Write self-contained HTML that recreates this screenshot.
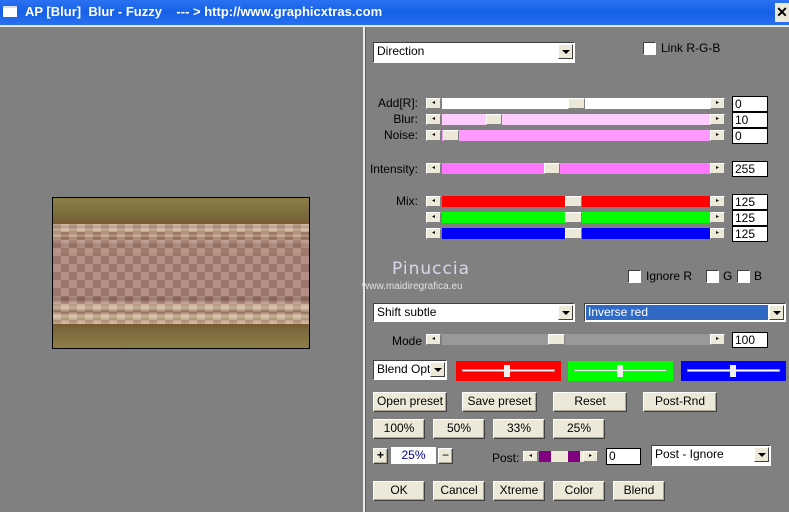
<!DOCTYPE html>
<html><head><style>
*{margin:0;padding:0;box-sizing:border-box}
body{width:789px;height:512px;background:#808080;position:relative;overflow:hidden;font-family:"Liberation Sans",sans-serif;font-size:12px;color:#000}
.a{position:absolute}
.btn{position:absolute;background:#ece9d8;border:1px solid;border-color:#fff #404040 #404040 #fff;box-shadow:inset -1px -1px 0 #aca899;text-align:center;font-size:12px;line-height:17px}
.sb{position:absolute;width:15px;height:11px;background:#ece9d8;border:1px solid;border-color:#fff #808080 #808080 #fff;font-size:6px;line-height:9px;text-align:center}
.th{position:absolute;height:11px;background:#ece9d8;border:1px solid;border-color:#fff #808080 #808080 #fff}
.inp{position:absolute;background:#fff;border:1px solid #000;font-size:12px;line-height:14px;padding-left:2px;width:36px;height:16px;left:732px}
.lbl{position:absolute;font-size:12px;text-align:right;width:62px;left:356px}
.dd{position:absolute;background:#fff;border:1px solid;border-color:#404040 #fff #fff #404040;font-size:12px;padding-left:3px;line-height:17px}
.dd .ar{position:absolute;right:1px;top:1px;width:15px;height:15px;background:#ece9d8;border:1px solid;border-color:#fff #404040 #404040 #fff}
.dd .ar:after{content:"";position:absolute;left:3px;top:5px;border-left:4px solid transparent;border-right:4px solid transparent;border-top:4px solid #000}
.cb{position:absolute;width:13px;height:13px;background:#fff;border:1px solid;border-color:#404040 #fff #fff #404040}
</style></head><body>
<div class="a" style="left:0;top:0;width:789px;height:25px;background:linear-gradient(#2a72f2,#1560e6 50%,#2a6ff0);"></div>
<div class="a" style="left:3px;top:6px;width:14px;height:11px;background:#fff;border-top:2px solid #dde"></div>
<div class="a" style="left:25px;top:4px;color:#fff;font-weight:bold;font-size:13px;white-space:pre">AP [Blur]  Blur - Fuzzy    --- &gt; http://www.graphicxtras.com</div>
<div class="a" style="left:775px;top:3px;width:14px;height:19px;background:#ece9d8;font-weight:bold;font-size:14px;text-align:center;line-height:19px">✕</div>
<div class="a" style="left:0;top:25px;width:789px;height:2px;background:#e8e8e8"></div>
<div class="a" style="left:363px;top:25px;width:2px;height:487px;background:#e8e8e8"></div>
<div class="a" style="left:365px;top:27px;width:1px;height:485px;background:#606060"></div>

<div class="a" style="left:52px;top:197px;width:258px;height:152px;border:1px solid #000;overflow:hidden;background:#a88478">
<div class="a" style="left:0;top:0;width:256px;height:26px;background:linear-gradient(#8c7e48,#7a6a3c 18px,#7a5a30)"></div>
<div class="a" style="left:0;top:26px;width:256px;height:100px;background:
repeating-linear-gradient(rgba(0,0,0,0) 0 14px,rgba(0,0,0,0) 14px),
conic-gradient(rgba(255,255,255,.12) 25%,rgba(0,0,0,.08) 0 50%,rgba(255,255,255,.12) 0 75%,rgba(0,0,0,.08) 0) 0 0/16px 16px,
linear-gradient(#d0b49a 0,#b09080 3px,#d8c0a0 6px,#a07868 9px,#c8a890 12px,#9a7060 14px,#b89888 17px,#9c7468 21px,#b08878 26px,#a88078 32px,#a88078 72px,#8c6458 75px,#c0a090 80px,#d8c0a0 84px,#9a7060 88px,#d8c4a4 92px,#b89a80 96px,#d0b498 100px)"></div>
<div class="a" style="left:0;top:126px;width:256px;height:24px;background:linear-gradient(#7a5a30,#7a6a3c 6px,#8c7e48)"></div>
</div>

<div class="dd" style="left:373px;top:42px;width:202px;height:21px">Direction<div class="ar"></div></div>
<div class="cb" style="left:643px;top:42px"></div>
<div class="a" style="left:661px;top:41px">Link R-G-B</div>

<div class="lbl" style="top:96px">Add[R]:</div>
<div class="lbl" style="top:112px">Blur:</div>
<div class="lbl" style="top:128px">Noise:</div>
<div class="lbl" style="top:162px">Intensity:</div>
<div class="lbl" style="top:194px">Mix:</div>

<div class="sb" style="left:426px;top:98px">◂</div><div class="a" style="left:442px;top:98px;width:268px;height:11px;background:#fff"></div><div class="th" style="left:568px;top:98px;width:17px"></div><div class="sb" style="left:710px;top:98px">▸</div><div class="inp" style="top:96px">0</div>
<div class="sb" style="left:426px;top:114px">◂</div><div class="a" style="left:442px;top:114px;width:268px;height:11px;background:#ffccff"></div><div class="th" style="left:486px;top:114px;width:16px"></div><div class="sb" style="left:710px;top:114px">▸</div><div class="inp" style="top:112px">10</div>
<div class="sb" style="left:426px;top:130px">◂</div><div class="a" style="left:442px;top:130px;width:268px;height:11px;background:#ff99ff"></div><div class="th" style="left:443px;top:130px;width:16px"></div><div class="sb" style="left:710px;top:130px">▸</div><div class="inp" style="top:128px">0</div>
<div class="sb" style="left:426px;top:163px">◂</div><div class="a" style="left:442px;top:163px;width:268px;height:11px;background:#ff77ff"></div><div class="th" style="left:544px;top:163px;width:16px"></div><div class="sb" style="left:710px;top:163px">▸</div><div class="inp" style="top:161px">255</div>
<div class="sb" style="left:426px;top:196px">◂</div><div class="a" style="left:442px;top:196px;width:268px;height:11px;background:#f00"></div><div class="th" style="left:565px;top:196px;width:17px"></div><div class="sb" style="left:710px;top:196px">▸</div><div class="inp" style="top:194px">125</div>
<div class="sb" style="left:426px;top:212px">◂</div><div class="a" style="left:442px;top:212px;width:268px;height:11px;background:#0f0"></div><div class="th" style="left:565px;top:212px;width:17px"></div><div class="sb" style="left:710px;top:212px">▸</div><div class="inp" style="top:210px">125</div>
<div class="sb" style="left:426px;top:228px">◂</div><div class="a" style="left:442px;top:228px;width:268px;height:11px;background:#00f"></div><div class="th" style="left:565px;top:228px;width:17px"></div><div class="sb" style="left:710px;top:228px">▸</div><div class="inp" style="top:226px">125</div>

<div class="a" style="left:392px;top:259px;font-size:17px;color:#d8d8e8;font-family:'DejaVu Sans',sans-serif;letter-spacing:1px">Pinuccia</div>
<div class="a" style="left:362px;top:281px;font-size:10px;color:#e0e0e0">www.maidiregrafica.eu</div>
<div class="cb" style="left:628px;top:270px"></div><div class="a" style="left:646px;top:269px">Ignore R</div>
<div class="cb" style="left:706px;top:270px"></div><div class="a" style="left:723px;top:269px">G</div>
<div class="cb" style="left:737px;top:270px"></div><div class="a" style="left:754px;top:269px">B</div>

<div class="dd" style="left:373px;top:303px;width:202px;height:19px;line-height:16px">Shift subtle<div class="ar"></div></div>
<div class="dd" style="left:584px;top:303px;width:202px;height:19px;line-height:16px;color:#fff"><div class="a" style="left:1px;top:1px;right:17px;bottom:1px;background:#316ac5"></div><span style="position:relative">Inverse red</span><div class="ar"></div></div>

<div class="a" style="left:392px;top:334px;font-size:12px">Mode</div>
<div class="sb" style="left:426px;top:334px">◂</div><div class="a" style="left:442px;top:334px;width:268px;height:11px;background:#999"></div><div class="th" style="left:548px;top:334px;width:17px"></div><div class="sb" style="left:710px;top:334px">▸</div><div class="inp" style="top:332px">100</div>

<div class="dd" style="left:373px;top:360px;width:74px;height:20px;overflow:hidden;white-space:nowrap">Blend Opti<div class="ar"></div></div>
<div class="a" style="left:456px;top:361px;width:105px;height:20px;background:#f00"><div class="a" style="left:6px;top:8px;width:93px;height:3px;background:#fff;border:1px solid #999"></div><div class="a" style="left:48px;top:4px;width:6px;height:12px;background:#eee"></div></div>
<div class="a" style="left:568px;top:361px;width:105px;height:20px;background:#0f0"><div class="a" style="left:6px;top:8px;width:93px;height:3px;background:#fff;border:1px solid #999"></div><div class="a" style="left:49px;top:4px;width:6px;height:12px;background:#eee"></div></div>
<div class="a" style="left:681px;top:361px;width:105px;height:20px;background:#00f"><div class="a" style="left:6px;top:8px;width:93px;height:3px;background:#fff;border:1px solid #999"></div><div class="a" style="left:49px;top:4px;width:6px;height:12px;background:#eee"></div></div>

<div class="btn" style="left:373px;top:392px;width:74px;height:20px">Open preset</div>
<div class="btn" style="left:462px;top:392px;width:75px;height:20px">Save preset</div>
<div class="btn" style="left:553px;top:392px;width:74px;height:20px">Reset</div>
<div class="btn" style="left:643px;top:392px;width:74px;height:20px">Post-Rnd</div>

<div class="btn" style="left:373px;top:419px;width:52px;height:20px">100%</div>
<div class="btn" style="left:433px;top:419px;width:52px;height:20px">50%</div>
<div class="btn" style="left:493px;top:419px;width:52px;height:20px">33%</div>
<div class="btn" style="left:553px;top:419px;width:52px;height:20px">25%</div>

<div class="btn" style="left:373px;top:448px;width:15px;height:16px;line-height:13px;font-weight:bold">+</div>
<div class="a" style="left:391px;top:447px;width:45px;height:17px;background:#fff;color:#00008b;font-size:12px;text-align:center;line-height:17px">25%</div>
<div class="btn" style="left:438px;top:448px;width:15px;height:16px;line-height:13px">−</div>
<div class="a" style="left:492px;top:451px;font-size:12px">Post:</div>
<div class="sb" style="left:523px;top:451px">◂</div><div class="a" style="left:539px;top:451px;width:44px;height:11px;background:#ece9d8"><div class="a" style="left:0;top:0;width:12px;height:11px;background:#800080"></div><div class="a" style="left:29px;top:0;width:12px;height:11px;background:#800080"></div></div><div class="sb" style="left:583px;top:451px">▸</div>
<div class="inp" style="left:606px;top:448px;width:35px;height:17px">0</div>
<div class="dd" style="left:651px;top:445px;width:120px;height:21px">Post - Ignore<div class="ar"></div></div>

<div class="btn" style="left:373px;top:481px;width:52px;height:20px">OK</div>
<div class="btn" style="left:433px;top:481px;width:52px;height:20px">Cancel</div>
<div class="btn" style="left:493px;top:481px;width:52px;height:20px">Xtreme</div>
<div class="btn" style="left:553px;top:481px;width:52px;height:20px">Color</div>
<div class="btn" style="left:613px;top:481px;width:52px;height:20px">Blend</div>
</body></html>
